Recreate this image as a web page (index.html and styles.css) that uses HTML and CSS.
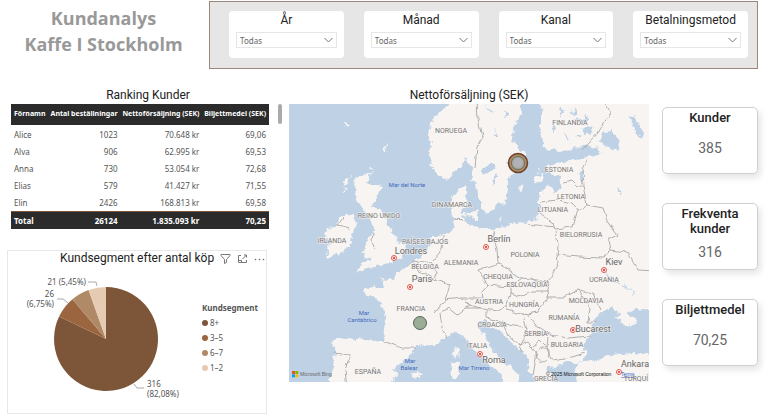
FILE: index.html
```
<!DOCTYPE html>
<html lang="sv">
<head>
    <meta charset="UTF-8">
    <meta name="viewport" content="width=device-width, initial-scale=1.0">
    <title>Kundanalys - Kaffe I Stockholm</title>
    <link rel="stylesheet" href="styles.css">
</head>
<body>
    <header class="header">
        <h1 class="page-title">Kundanalys<br>Kaffe I Stockholm</h1>
        <div class="filters">
            <div class="filter">
                <label for="year">År</label>
                <select id="year"><option>Todas</option></select>
            </div>
            <div class="filter">
                <label for="month">Månad</label>
                <select id="month"><option>Todas</option></select>
            </div>
            <div class="filter">
                <label for="channel">Kanal</label>
                <select id="channel"><option>Todas</option></select>
            </div>
            <div class="filter">
                <label for="payment">Betalningsmetod</label>
                <select id="payment"><option>Todas</option></select>
            </div>
        </div>
    </header>

    <main class="dashboard">
        <div class="left">
            <section class="ranking">
                <h2>Ranking Kunder</h2>
                <div class="table-wrap">
                    <table>
                        <thead>
                            <tr><th>Förnamn</th><th>Antal beställningar</th><th>Nettoförsäljning (SEK)</th><th>Biljettmedel (SEK)</th></tr>
                        </thead>
                        <tbody>
                            <tr><td>Alice</td><td>1023</td><td>70.648 kr</td><td>69,06</td></tr>
                            <tr><td>Alva</td><td>906</td><td>62.995 kr</td><td>69,53</td></tr>
                            <tr><td>Anna</td><td>730</td><td>53.054 kr</td><td>72,68</td></tr>
                            <tr><td>Elias</td><td>579</td><td>41.427 kr</td><td>71,55</td></tr>
                            <tr><td>Elin</td><td>2426</td><td>168.813 kr</td><td>69,58</td></tr>
                        </tbody>
                        <tfoot>
                            <tr><td>Total</td><td>26124</td><td>1.835.093 kr</td><td>70,25</td></tr>
                        </tfoot>
                    </table>
                    <div class="scroll-thumb"></div>
                </div>
            </section>

            <section class="segment">
                <div class="segment-head">
                    <h2>Kundsegment efter antal köp</h2>
                    <button type="button" aria-label="Filter">
                        <svg width="11" height="10" viewBox="0 0 11 10"><path d="M1 .5h9v1L6.500 5.500v3l-2 1v-4L1 1.500z"/></svg>
                    </button>
                    <button type="button" aria-label="Focus mode">
                        <svg width="11" height="10" viewBox="0 0 11 10"><path d="M4 1.500H1.500v7h8V6M1.500 6.500h3v2M5.500 5l4-4M7 1h2.500v2.500"/></svg>
                    </button>
                    <button type="button" aria-label="More options">
                        <svg width="11" height="10" viewBox="0 0 11 10"><g class="dots"><circle cx="1.500" cy="5.500" r=".8"/><circle cx="5.500" cy="5.500" r=".8"/><circle cx="9.500" cy="5.500" r=".8"/></g></svg>
                    </button>
                </div>
                <div class="segment-body">
                    <svg class="pie" width="188" height="143" viewBox="0 0 188 143" role="img" aria-label="Kundsegment">
                        <path fill="#7d5538" d="M98 69V17A52 52 0 1 1 51.100 46.600z"/>
                        <path fill="#9b6540" d="M98 69L51.100 46.600A52 52 0 0 1 64.400 29.300z"/>
                        <path fill="#b08a67" d="M98 69L64.400 29.300A52 52 0 0 1 80.600 20z"/>
                        <path fill="#e6cbb3" d="M98 69L80.600 20A52 52 0 0 1 98 17z"/>
                        <g class="leader">
                            <path d="M80 12h8l1 4"/>
                            <path d="M49 29h6l5 4"/>
                            <path d="M126 114l3 4h7"/>
                        </g>
                        <text x="78" y="15" text-anchor="end">21 (5,45%)</text>
                        <text x="46" y="27" text-anchor="end">26</text>
                        <text x="46" y="37" text-anchor="end">(6,75%)</text>
                        <text x="139" y="117">316</text>
                        <text x="139" y="127">(82,08%)</text>
                    </svg>
                    <div class="legend">
                        <h3>Kundsegment</h3>
                        <ul>
                            <li><span class="dot seg-8"></span>8+</li>
                            <li><span class="dot seg-35"></span>3–5</li>
                            <li><span class="dot seg-67"></span>6–7</li>
                            <li><span class="dot seg-12"></span>1–2</li>
                        </ul>
                    </div>
                </div>
            </section>
        </div>

        <section class="map">
            <h2>Nettoförsäljning (SEK)</h2>
            <svg viewBox="0 0 360 278">
                <defs>
                    <filter id="coast" x="0" y="0" width="360" height="278" filterUnits="userSpaceOnUse">
                        <feTurbulence type="fractalNoise" baseFrequency=".16" numOctaves="3" seed="4"/>
                        <feDisplacementMap in="SourceGraphic" scale="8" xChannelSelector="R" yChannelSelector="G"/>
                    </filter>
                    <filter id="wobble" x="0" y="0" width="360" height="278" filterUnits="userSpaceOnUse">
                        <feTurbulence type="fractalNoise" baseFrequency=".12" numOctaves="2" seed="7"/>
                        <feDisplacementMap in="SourceGraphic" scale="5" xChannelSelector="R" yChannelSelector="G"/>
                    </filter>
                    <g id="city"><circle r="2.500" fill="#fff" stroke="#e2574c" stroke-width="1"/><circle r="1.200" fill="#e2574c"/></g>
                </defs>
                <rect width="360" height="278" fill="#bed1e5"/>
                <g class="land" filter="url(#coast)">
                    <!-- Norway, Sweden -->
                    <path d="M159-9L159 0 150 8 143 16 140 31 143 39 140 48 143 63 148 71 156 75 163 71 171 63 178 54 183 64 184 76 191 91 191 103 197 110 204 108 205 101 216 99 219 86 219 73 228 66 238 54 236 49 228 44 223 36 224 23 233 8 233-9z"/>
                    <!-- continent, Finland round to the Black Sea -->
                    <path d="M253-9L252 9 252 23 253 41 259 46 273 47 289 43 301 41 313 49 299 53 286 56 269 59 258 62 259 69 271 73 273 86 265 88 259 81 252 89 249 99 251 108 248 114 239 119 226 118 216 123 204 126 193 123 183 121 176 118 173 113 174 103 179 98 176 91 176 82 168 88 162 93 162 104 165 116 164 126 161 128 153 130 143 134 139 143 131 154 123 158 118 164 108 169 108 174 96 176 93 173 95 183 86 183 73 187 78 191 86 194 94 201 97 213 96 226 94 237 76 236 59 234 51 233 43 238 46 248 45 259 41 273 41 290 104 290 104 278 108 269 104 264 113 258 124 249 127 243 136 241 146 241 156 234 166 227 174 231 179 236 186 248 196 256 208 266 214 274 218 290 231 290 228 269 219 261 208 251 198 236 190 226 189 219 198 215 201 223 209 226 223 239 234 248 239 256 238 266 244 273 248 290 266 290 261 269 258 263 268 262 276 258 286 259 293 258 297 250 294 241 301 233 304 219 311 209 323 203 328 208 333 211 346 206 370 203 370-9z"/>
                    <!-- Turkey -->
                    <path d="M289 259L309 256 323 251 343 249 370 251 370 290 291 290 286 269z"/>
                    <path d="M326 213L333 210 338 209 348 216 339 223z"/>
                    <!-- Great Britain, Ireland -->
                    <path d="M71 70L83 69 76 79 93 82 89 93 81 102 91 104 96 116 104 128 108 136 116 141 113 153 106 158 93 161 79 163 68 169 74 159 84 154 74 153 76 144 79 133 86 128 83 116 76 109 68 96 64 79z"/>
                    <path d="M56 110L64 111 68 119 64 124 61 143 49 151 36 153 41 139 36 133 38 124 46 123 51 114z"/>
                    <path d="M58 73L62 72 57 81 53 84zM54 84L59 86 55 88zM81 62L86 64 82 66zM94 44L98 40 97 49zM55 18L60 20 57 23z"/>
                    <!-- islands -->
                    <path d="M168 242L170 246 168 255 163 250zM164 257L171 258 170 272 164 275 161 270zM122 270L129 267 133 271 127 275zM229 86L233 80 235 81 231 88zM179 109L190 106 190 117 183 116zM173 109L178 109 177 115zM211 113L214 114 212 117zM246 72L256 70 252 79 246 78zM247 65L252 65 250 69z"/>
                </g>
                <g class="lake" filter="url(#coast)">
                    <path d="M315 27L322 26 331 39 328 48 319 43 310 37zM340 11L348 16 354 28 352 36 345 26zM192 65L198 62 202 58 207 62 200 68 192 72zM203 76L207 69 208 71 204 82zM291 66L296 68 294 78 290 74zM216 57L222 58 217 60zM279 8L289 4 287 11zM262 19L267 24 264 29zM284 16L299 12 296 19zM293 24L301 21 304 28 297 31zM270 2L275 7 271 14zM286 33L293 31 290 35zM275 29L280 36 277 36zM196 2L207 8 202 9zM214 7L220 11 214 13zM328 84L333 88 329 88zM205 23L208 33 206 33z"/>
                    <path class="river" d="M315 166Q318 173 326 177T340 184 345 190M198 120L205 128M94 205L98 216"/>
                </g>
                <g class="borders" filter="url(#wobble)">
                    <path d="M188-5L189 16 193 33 188 43 186 64M314-5L321 9 309 29 294 46M298 54L293 66 294 82 296 91 298 101M273 78L283 76 289 82 294 82M251 98L269 96 283 99 288 106M298 101L288 106 283 123 266 125 264 119 251 109M239 120L265 123"/>
                    <path d="M298 101L314 104 318 116 328 131 319 136 321 146 314 154 289 153 268 151M321 146L339 148 349 166 366 167M266 126L269 141 268 151 269 159 259 179M203 126L208 146 209 159"/>
                    <path d="M209 159L189 166 199 181 221 183 233 174 223 168zM233 174L248 176 261 179 258 188 244 188 229 193 221 189 221 183M199 181L193 188 194 194 173 194M176 204L193 204 209 206 218 201 221 189M218 201L218 206 234 211 249 208 259 193 258 188"/>
                    <path d="M259 193L276 193 289 186 301 204 299 218 308 218M289 186L304 189 311 206M238 209L249 223 261 231 279 234 301 232M259 233L258 243 263 256 283 253 296 249M234 211L238 226 231 241 234 248M198 206L198 214 213 218 234 223M213 218L219 231 231 241M243 243L248 249 244 271M231 241L238 238 243 243 251 236 258 243M247 248Q254 240 261 247 262 256 254 258 246 257 247 248"/>
                    <path d="M146 209L156 196 161 181 146 176 129 166 123 157M156 196L173 194 181 201 168 211 159 204 151 210 153 223 158 234M124 156L143 159 148 169 146 176M154 131L153 146 143 157M94 237L113 244 126 244M45 249L61 251 56 266 58 283M54 114L49 121 61 124M165 115L174 116M176 198L181 201 198 206M84 128L83 138 86 145"/>
                </g>

                <g class="country">
                    <text x="162" y="29">NORUEGA</text>
                    <text x="281" y="21">FINLANDIA</text>
                    <text x="270" y="68">ESTONIA</text>
                    <text x="282" y="95">LETONIA</text>
                    <text x="264" y="108">LITUANIA</text>
                    <text x="292" y="133">BIELORRUSIA</text>
                    <text x="236" y="153">POLONIA</text>
                    <text x="172" y="161">ALEMANIA</text>
                    <text x="315" y="178">UCRANIA</text>
                    <text x="209" y="175">CHEQUIA</text>
                    <text x="238" y="183">ESLOVAQUIA</text>
                    <text x="200" y="200">AUSTRIA</text>
                    <text x="235" y="203">HUNGRÍA</text>
                    <text x="297" y="199">MOLDAVIA</text>
                    <text x="275" y="216">RUMANÍA</text>
                    <text x="203" y="223">CROACIA</text>
                    <text x="247" y="232">SERBIA</text>
                    <text x="278" y="243">BULGARIA</text>
                    <text x="188" y="244">ITALIA</text>
                    <text x="257" y="277">GRECIA</text>
                    <text x="347" y="277">TURQUÍ</text>
                    <text x="122" y="207">FRANCIA</text>
                    <text x="79" y="270">ESPAÑA</text>
                    <text x="136" y="165">BÉLGICA</text>
                    <text x="136" y="140">PAÍSES BAJOS</text>
                    <text x="43" y="139">IRLANDA</text>
                    <text x="90" y="114">REINO UNIDO</text>
                    <text x="163" y="103">DINAMARCA</text>
                </g>
                <g class="sea">
                    <text x="118" y="83">Mar del Norte</text>
                    <text x="75" y="211">Mar</text>
                    <text x="73" y="218">Cantábrico</text>
                    <text x="121" y="259">Mar</text>
                    <text x="120" y="266">Balear</text>
                    <text x="185" y="266">Mar Tirreno</text>
                </g>
                <use href="#city" x="105" y="154"/>
                <use href="#city" x="121" y="183"/>
                <use href="#city" x="197" y="143"/>
                <use href="#city" x="315" y="166"/>
                <use href="#city" x="284" y="226"/>
                <use href="#city" x="191" y="250"/>
                <use href="#city" x="330" y="268"/>
                <g class="capital">
                    <text x="122" y="150">Londres</text>
                    <text x="133" y="178">París</text>
                    <text x="210" y="138">Berlín</text>
                    <text x="325" y="161">Kiev</text>
                    <text x="304" y="228">Bucarest</text>
                    <text x="205" y="259">Roma</text>
                    <text x="346" y="263">Ankara</text>
                </g>

                <!-- sales bubbles -->
                <circle cx="229" cy="59" r="9.500" fill="#b08a67" stroke="#6b4128" stroke-width="1.500"/>
                <circle cx="229" cy="59" r="6.500" fill="#a9abab" stroke="#5f7057" stroke-width="1"/>
                <circle cx="229" cy="59" r="4.500" fill="#b0b2b5"/>
                <circle cx="131" cy="219" r="6.500" fill="#9aae95" stroke="#56675a" stroke-width="1"/>

                <g class="credit">
                    <path fill="#f25022" d="M3 267h3v3h-3z"/>
                    <path fill="#7fba00" d="M6.300 267h3v3h-3z"/>
                    <path fill="#00a4ef" d="M3 270.300h3v3h-3z"/>
                    <path fill="#ffb900" d="M6.300 270.300h3v3h-3z"/>
                    <text class="bing" x="11" y="272">Microsoft Bing</text>
                    <text x="257" y="272">© 2025 Microsoft Corporation</text>
                    <a href="#terms"><text x="332" y="272">Terms</text></a>
                </g>
            </svg>
        </section>

        <div class="kpis">
            <section class="kpi">
                <h2>Kunder</h2>
                <p>385</p>
            </section>
            <section class="kpi">
                <h2>Frekventa kunder</h2>
                <p>316</p>
            </section>
            <section class="kpi">
                <h2>Biljettmedel</h2>
                <p>70,25</p>
            </section>
        </div>
    </main>
</body>
</html>
```

FILE: styles.css
```
* {
    box-sizing: border-box;
}

body {
    margin: 0;
    padding: 1px 10px 0 7px;
    font-family: "Noto Sans", "Open Sans", sans-serif;
    font-size: 8px;
    color: #555;
    background-color: #fff;
}

h1, h2, h3, p, ul {
    margin: 0;
    padding: 0;
}

h2 {
    font-family: Roboto, sans-serif;
    font-size: 12px;
    font-weight: 400;
    line-height: 15px;
    color: #222;
    text-align: center;
}

.header {
    display: flex;
    align-items: flex-start;
    gap: 12px;
}

.page-title {
    flex: 0 0 190px;
    padding: 4px 0 0 3px;
    font-family: "Open Sans", sans-serif;
    font-size: 18px;
    line-height: 26px;
    font-weight: 700;
    color: #999;
    text-align: center;
}

.filters {
    flex: 1;
    display: flex;
    gap: 20px;
    padding: 9px 9px 10px 19px;
    background-color: #e6e6e6;
    border: 1px solid #9c877a;
}

.filter {
    flex: 1;
    min-width: 0;
    padding: 1px 7px 10px;
    background-color: #fff;
    border-radius: 4px;
}

.filter label {
    display: block;
    margin-bottom: 4px;
    font-family: Roboto, sans-serif;
    font-size: 12px;
    line-height: 16px;
    color: #222;
    text-align: center;
}

.filter select {
    display: block;
    width: 100%;
    height: 16px;
    padding: 0 3px;
    font-family: inherit;
    font-size: 8px;
    color: #666;
    appearance: none;
    border: 1px solid #e6e6e6;
    border-radius: 0;
    background: #fff url("data:image/svg+xml,%3Csvg xmlns='http://www.w3.org/2000/svg' width='9' height='6'%3E%3Cpath d='M.5 1l4 4 4-4' fill='none' stroke='%23777'/%3E%3C/svg%3E") no-repeat right 3px center;
}

.dashboard {
    display: flex;
    align-items: flex-start;
    margin-top: 19px;
}

.dashboard h2 {
    padding-bottom: 1px;
}

.left {
    flex: 0 0 282px;
}

.table-wrap {
    display: flex;
    gap: 9px;
    padding-left: 4px;
}

table {
    width: 258px;
    border-collapse: collapse;
    white-space: nowrap;
}

th, td {
    padding: 0 2px;
    text-align: right;
}

th:first-child, td:first-child {
    padding-left: 3px;
    text-align: left;
}

th:last-child, td:last-child {
    padding-right: 3px;
}

th {
    height: 21px;
    padding-bottom: 3px;
    font-size: 7px;
    font-weight: 700;
    color: #fff;
    background-color: #2b2b2b;
}

tbody td {
    height: 17px;
}

tbody tr:first-child td {
    height: 18px;
}

tfoot td {
    height: 18px;
    font-weight: 700;
    color: #fff;
    background-color: #2b2b2b;
    border-top: 1px solid #7d5538;
}

.scroll-thumb {
    width: 4px;
    height: 20px;
    border-radius: 2px;
    background-color: #aaa;
}

.segment {
    width: 260px;
    margin-top: 21px;
    border: 1px solid #e8e8e8;
}

.segment-head {
    display: flex;
    align-items: center;
    gap: 6px;
    padding: 0 1px 3px 0;
}

.segment-head h2 {
    flex: 1;
    padding-left: 52px;
    white-space: nowrap;
}

.segment-head button {
    padding: 0;
    border: 0;
    background: none;
    line-height: 0;
}

.segment-head svg {
    fill: none;
    stroke: #777;
    stroke-width: 1;
}

.segment-head .dots {
    fill: #666;
    stroke: none;
}

.segment-body {
    display: flex;
    align-items: center;
    gap: 6px;
}

.pie {
    flex: none;
}

.pie text {
    font-size: 8px;
    fill: #555;
}

.leader {
    fill: none;
    stroke: #aaa;
}

.legend {
    padding-bottom: 6px;
}

.legend h3 {
    margin-bottom: 1px;
    font-size: 8px;
    line-height: 12px;
}

.legend ul {
    list-style: none;
}

.legend li {
    display: flex;
    align-items: center;
    gap: 2px;
    height: 15px;
}

.dot {
    width: 6px;
    height: 6px;
    border-radius: 50%;
}

.seg-8 { background-color: #7d5538; }
.seg-35 { background-color: #9b6540; }
.seg-67 { background-color: #b08a67; }
.seg-12 { background-color: #e6cbb3; }

.map {
    flex: 1;
    min-width: 0;
}

.map svg {
    display: block;
    width: 100%;
    height: auto;
}

.map text {
    font-family: Roboto, sans-serif;
    text-anchor: middle;
    paint-order: stroke;
}

.land { fill: #f7f4f2; }
.lake { fill: #bed1e5; }

.river {
    fill: none;
    stroke: #bed1e5;
}

.borders {
    fill: none;
    stroke: #b0aeae;
}

.country {
    font-size: 7px;
    fill: #777;
}

.country text, .capital text {
    stroke: #f7f4f2;
    stroke-width: 1px;
}

.sea {
    font-size: 6px;
    fill: #4469bd;
}

.capital {
    font-size: 9px;
    fill: #666;
}

.map .credit text {
    font-family: "Liberation Sans", sans-serif;
    font-size: 5px;
    text-anchor: start;
    fill: #111;
}

.map .credit .bing {
    fill: #666;
}

.map .credit a text {
    fill: #2a5bc0;
    text-decoration: underline;
}

.kpis {
    flex: 0 0 109px;
    display: flex;
    flex-direction: column;
    gap: 29px;
    padding: 19px 0 0 13px;
}

.kpi {
    display: flex;
    flex-direction: column;
    min-height: 67px;
    padding: 2px 8px;
    border: 1px solid #d0d0d0;
    border-radius: 5px;
    box-shadow: 3px 4px 6px rgba(0, 0, 0, 0.1);
    text-align: center;
}

.kpi h2 {
    padding: 0;
    font-size: 13px;
    font-weight: 500;
}

.kpi p {
    flex: 1;
    display: flex;
    align-items: center;
    justify-content: center;
    font-family: Roboto, sans-serif;
    font-size: 14px;
    color: #666;
}
```
